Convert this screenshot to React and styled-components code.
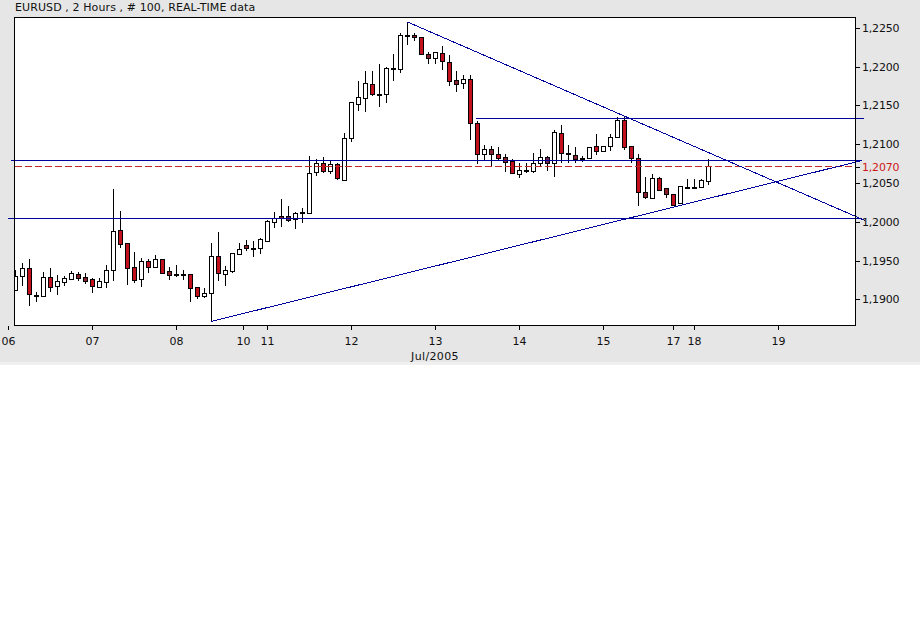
import React from "react";
import styled, { createGlobalStyle } from "styled-components";

const GlobalStyle = createGlobalStyle`
  html, body {
    margin: 0;
    padding: 0;
    background: #ffffff;
  }
`;

// high, low, body top, body bottom, kind (w white, r red, d dark red, p purple)
const candles = [
  [270, 290, 275.5, 289.5, "w"], [263, 286, 268, 276, "w"], [259, 306, 268, 294, "r"], [292, 302, 295, 296, "w"],
  [272, 296, 277, 296, "w"], [268, 292, 277, 287, "r"], [275, 295, 281, 286, "w"], [276, 286, 278, 282, "w"],
  [271, 279, 273, 279, "w"], [272, 281, 274, 278, "d"], [273, 284, 277, 281, "d"], [278, 293, 279, 286, "r"],
  [278, 287, 281, 287, "w"], [265, 288, 270, 282, "w"], [189, 281, 231, 270, "w"], [211, 248, 230, 244, "r"],
  [243, 285, 243, 268, "r"], [252, 283, 267, 280, "r"], [258, 287, 261, 279, "w"], [259, 273, 261, 267, "r"],
  [255, 268, 259, 267, "w"], [259, 274, 259, 273, "r"], [267, 280, 271, 275, "d"], [265, 277, 274, 275, "w"],
  [270, 280, 274, 275, "w"], [274, 302, 274, 288, "r"], [287, 299, 287, 296, "r"], [288, 298, 293, 296, "w"],
  [243, 322, 256, 293, "w"], [232, 281, 256, 273, "r"], [266, 286, 270, 274, "w"], [253, 273, 253, 271, "w"],
  [243, 255, 249, 254, "w"], [240, 251, 245, 248, "d"], [241, 257, 248, 249, "w"], [238, 254, 239, 248, "w"],
  [220, 242, 221, 241, "w"], [212, 228, 218, 222, "w"], [199, 227, 216, 218, "d"], [206, 222, 216, 220, "p"],
  [212, 229, 213, 219, "w"], [208, 223, 212, 213, "w"], [156, 214, 173, 213, "w"], [159, 176, 163, 172, "w"],
  [157, 173, 163, 171, "r"], [161, 174, 164, 171, "w"], [163, 180, 164, 178, "r"], [133, 180, 138, 180, "w"],
  [102, 142, 102, 138, "w"], [81, 111, 97, 104, "w"], [71, 112, 83, 98, "w"], [71, 96, 84, 94, "r"],
  [64, 107, 94, 95, "w"], [67, 103, 68, 94, "w"], [54, 81, 68, 69, "w"], [33, 73, 35, 69, "w"],
  [22, 45, 35, 36, "w"], [33, 41, 35, 37, "d"], [37, 55, 37, 54, "r"], [52, 64, 54, 58, "d"],
  [52, 64, 52, 58, "w"], [46, 70, 53, 61, "r"], [55, 86, 62, 81, "r"], [71, 92, 80, 84, "d"],
  [75, 89, 79, 83, "w"], [75, 140, 79, 123, "r"], [121, 164, 123, 154, "r"], [145, 161, 149, 154, "w"],
  [146, 166, 149, 154, "d"], [147, 160, 154, 158, "r"], [154, 172, 157, 162, "d"], [159, 174, 161, 173, "r"],
  [163, 178, 170, 174, "w"], [163, 173, 170, 171, "w"], [153, 173, 163, 171, "w"], [149, 167, 157, 163, "w"],
  [156, 171, 157, 163, "p"], [130, 177, 132, 163, "w"], [125, 163, 133, 153, "r"], [145, 163, 153, 154, "w"],
  [147, 163, 155, 159, "d"], [156, 162, 158, 159, "w"], [147, 158, 147, 158, "w"], [134, 155, 146, 151, "r"],
  [146, 152, 146, 151, "w"], [134, 151, 137, 146, "w"], [117, 137, 120, 137, "w"], [117, 150, 120, 147, "r"],
  [146, 163, 146, 158, "r"], [154, 206, 158, 192, "r"], [177, 199, 192, 197, "d"], [174, 198, 178, 198, "w"],
  [177, 191, 178, 190, "r"], [188, 198, 188, 194, "d"], [194, 205, 194, 205, "r"], [186, 204, 186, 203, "w"],
  [179, 189, 187, 188, "w"], [179, 189, 187, 188, "w"], [179, 187, 180, 187, "w"], [159, 185, 166, 181, "w"],
];

const priceLabels = [
  ["1,2250", 28],
  ["1,2200", 67],
  ["1,2150", 105],
  ["1,2100", 144],
  ["1,2070", 167, true],
  ["1,2050", 183],
  ["1,2000", 222],
  ["1,1950", 261],
  ["1,1900", 299],
];

const dayLabels = [
  ["06", 8], ["07", 92], ["08", 176], ["10", 243], ["11", 267], ["12", 351],
  ["13", 435], ["14", 519], ["15", 603], ["17", 673], ["18", 694], ["19", 778],
];

const trendLines = [
  [8, 218.5, 860, 218.5],
  [11, 160.5, 862, 160.5],
  [476, 118.5, 864, 118.5],
  [407.5, 22, 865, 220.5],
  [211, 321.5, 862, 160.5],
];

const Panel = styled.div`
  width: 920px;
  height: 362px;
  background: #e6e6e6;
  border-bottom: 3px solid #f0f0f0;
  display: flex;
  flex-direction: column;
`;

const Title = styled.div`
  height: 17px;
  padding-left: 15px;
  font-family: "DejaVu Sans", Verdana, sans-serif;
  font-size: 11px;
  letter-spacing: 0.1px;
  line-height: 16px;
  color: #111111;
  white-space: nowrap;
`;

const Chart = styled.svg`
  display: block;
  font-family: "DejaVu Sans", Verdana, sans-serif;
`;

const PlotArea = styled.rect`
  fill: #ffffff;
`;

const PlotFrame = styled.rect`
  fill: none;
  stroke: #000000;
  stroke-width: 1;
`;

const Wick = styled.rect`
  fill: #000000;
`;

const bodyColors = { w: "#ffffff", r: "#c3101f", d: "#86202a", p: "#6e2060" };

const Body = styled.rect`
  fill: ${(p) => bodyColors[p.$kind]};
  stroke: #000000;
  stroke-width: 1;
`;

const TrendLine = styled.line`
  stroke: #00009c;
  stroke-width: 1;
`;

const LastPrice = styled.line`
  stroke: #c62828;
  stroke-width: 1;
  stroke-dasharray: 7 3;
`;

const Tick = styled.line`
  stroke: #000000;
  stroke-width: 1;
`;

const AxisLabel = styled.text`
  font-size: 11px;
  fill: ${(p) => (p.$red ? "#d01818" : "#111111")};
`;

const MonthLabel = styled(AxisLabel)`
  letter-spacing: 0.35px;
`;

const Candle = ({ index, high, low, top, bottom, kind }) => {
  const x = 15 + index * 7;
  return (
    <g>
      <Wick x={x} y={high} width={1} height={low - high} />
      <Body $kind={kind} x={x - 1.5} y={Math.round(top) + 0.5} width={4} height={Math.max(1, Math.round(bottom) - Math.round(top))} />
    </g>
  );
};

export default function App() {
  return (
    <>
      <GlobalStyle />
      <Panel>
        <Title>EURUSD , 2 Hours , # 100, REAL-TIME data</Title>
        <Chart width="920" height="345" viewBox="0 17 920 345" shapeRendering="crispEdges">
          <defs>
            <clipPath id="plot-area">
              <rect x="14.5" y="17.5" width="841" height="308" />
            </clipPath>
          </defs>
          <PlotArea x="14.5" y="17.5" width="841" height="308" />
          <g clipPath="url(#plot-area)">
            {candles.map(([high, low, top, bottom, kind], i) => (
              <Candle key={i} index={i} high={high} low={low} top={top} bottom={bottom} kind={kind} />
            ))}
          </g>
          <LastPrice x1="15" y1="166.5" x2="853" y2="166.5" />
          {trendLines.map(([x1, y1, x2, y2], i) => (
            <TrendLine key={i} x1={x1} y1={y1} x2={x2} y2={y2} />
          ))}
          <PlotFrame x="14.5" y="17.5" width="841" height="308" />
          {priceLabels.map(([label, y, red]) => (
            <g key={label}>
              <Tick x1="856" y1={y + 0.5} x2="860" y2={y + 0.5} />
              <AxisLabel $red={red} x="862" y={y + 4} textLength="37.5">
                {label}
              </AxisLabel>
            </g>
          ))}
          {dayLabels.map(([label, x]) => (
            <g key={label}>
              <Tick x1={x + 0.5} y1="326" x2={x + 0.5} y2="330" />
              <AxisLabel x={x + 0.5} y="345" textAnchor="middle">
                {label}
              </AxisLabel>
            </g>
          ))}
          <MonthLabel x="435" y="360" textAnchor="middle">
            Jul/2005
          </MonthLabel>
        </Chart>
      </Panel>
    </>
  );
}
